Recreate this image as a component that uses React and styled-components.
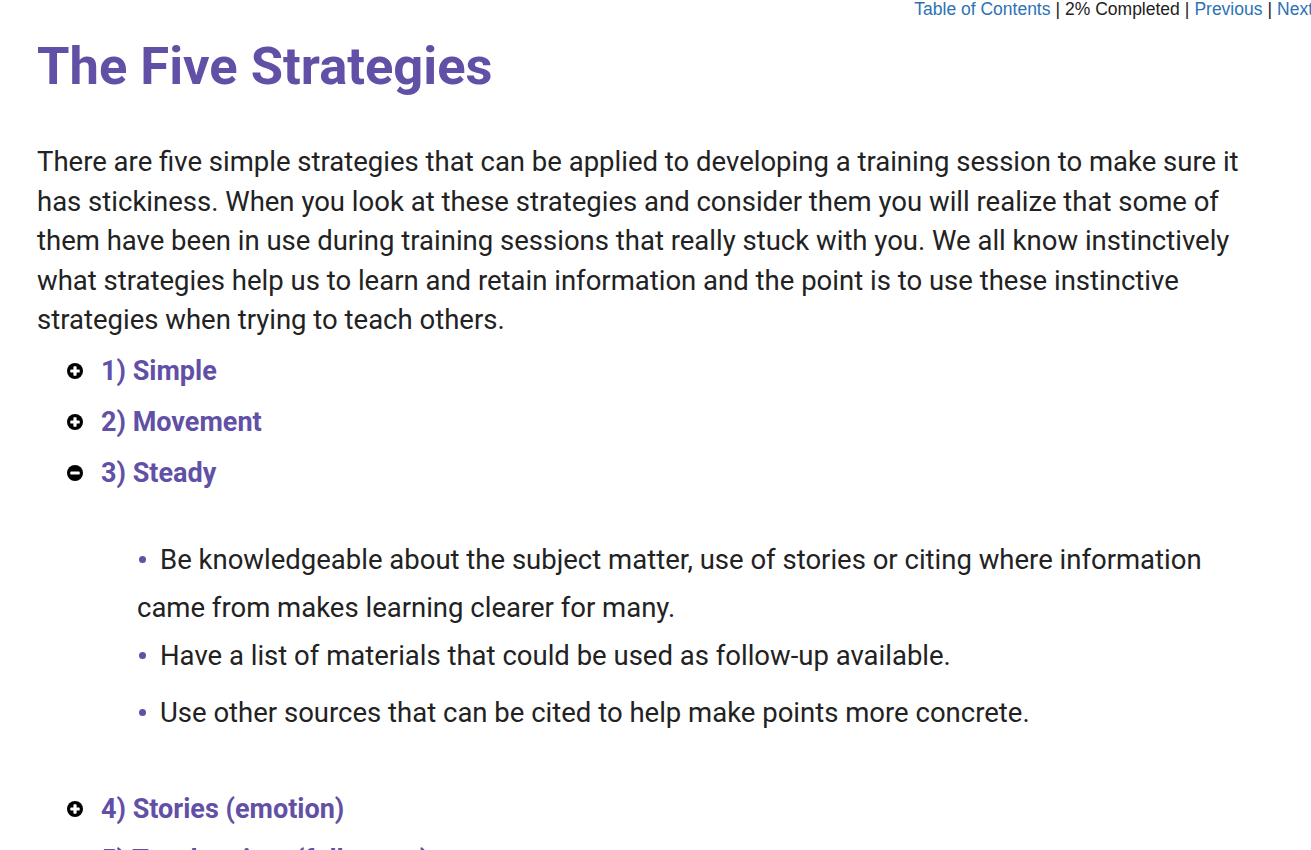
import React, { useState } from 'react';
import styled, { createGlobalStyle } from 'styled-components';

const GlobalStyle = createGlobalStyle`
  html, body {
    margin: 0;
    padding: 0;
    background: #fff;
    overflow-x: hidden;
  }
  body {
    font-family: Roboto, 'Noto Sans', sans-serif;
    color: #222;
  }
`;

const PURPLE = '#6250a6';

const Page = styled.div`
  width: 1311px;
  height: 850px;
  overflow: hidden;
`;

const TopNav = styled.nav`
  display: flex;
  justify-content: flex-end;
  margin-right: -2px;
  font-family: 'Liberation Sans', Arial, sans-serif;
  font-size: 17.5px;
  line-height: 18px;
  color: #222;
  white-space: nowrap;

  a {
    color: #2b72b5;
    text-decoration: none;
  }
  span.sep {
    margin: 0 5px;
  }
`;

const Content = styled.main`
  padding: 0 0 0 37px;
  width: 1215px;
`;

const Title = styled.h1`
  margin: 17px 0 0;
  font-size: 52.5px;
  line-height: 62px;
  font-weight: 700;
  color: ${PURPLE};
`;

const Intro = styled.p`
  margin: 45px 0 0;
  font-size: 27.5px;
  line-height: 39.5px;
  color: #222;
`;

const Accordion = styled.ul`
  list-style: none;
  margin: 6px 0 0;
  padding: 0 0 0 30px;
`;

const Item = styled.li`
  margin: 0;
`;

const Header = styled.button`
  display: flex;
  align-items: center;
  gap: 18px;
  height: 51px;
  padding: 0;
  border: 0;
  background: none;
  cursor: pointer;
  font-family: Roboto, sans-serif;
  font-size: 27px;
  font-weight: 700;
  color: ${PURPLE};
`;

const Panel = styled.ul`
  list-style: none;
  margin: 0;
  padding: 37px 0 47px 70px;
`;

const Bullet = styled.li`
  font-size: 27.5px;
  line-height: 48px;
  color: #222;
  margin-top: ${(p) => (p.$gap ? `${p.$gap}px` : '0')};

  &::before {
    content: '';
    display: inline-block;
    width: 7px;
    height: 7px;
    border-radius: 50%;
    background: ${PURPLE};
    margin: 0 14px 0 2px;
    vertical-align: 0.2em;
  }
`;

function ToggleIcon({ open }) {
  return (
    <svg width="16" height="16" viewBox="0 0 16 16" aria-hidden="true">
      <circle cx="8" cy="8" r="8" fill="#000" />
      <rect x="3.3" y="6.4" width="9.4" height="3.2" rx="0.7" fill="#fff" />
      {!open && <rect x="6.4" y="3.3" width="3.2" height="9.4" rx="0.7" fill="#fff" />}
    </svg>
  );
}

const strategies = [
  { title: '1) Simple', points: [] },
  { title: '2) Movement', points: [] },
  {
    title: '3) Steady',
    points: [
      'Be knowledgeable about the subject matter, use of stories or citing where information came from makes learning clearer for many.',
      'Have a list of materials that could be used as follow-up available.',
      'Use other sources that can be cited to help make points more concrete.',
    ],
  },
  { title: '4) Stories (emotion)', points: [] },
  { title: '5) Touch points (follow-up)', points: [] },
];

export default function App() {
  const [open, setOpen] = useState(2);

  return (
    <Page>
      <GlobalStyle />
      <TopNav>
        <a href="#toc">Table of Contents</a>
        <span className="sep">|</span>
        <span>2% Completed</span>
        <span className="sep">|</span>
        <a href="#prev">Previous</a>
        <span className="sep">|</span>
        <a href="#next">Next</a>
      </TopNav>
      <Content>
        <Title>The Five Strategies</Title>
        <Intro>
          There are five simple strategies that can be applied to developing a training session to make sure it
          has stickiness. When you look at these strategies and consider them you will realize that some of
          them have been in use during training sessions that really stuck with you. We all know instinctively
          what strategies help us to learn and retain information and the point is to use these instinctive
          strategies when trying to teach others.
        </Intro>
        <Accordion>
          {strategies.map((s, i) => (
            <Item key={s.title}>
              <Header onClick={() => setOpen(open === i ? -1 : i)}>
                <ToggleIcon open={open === i} />
                {s.title}
              </Header>
              {open === i && (
                <Panel>
                  {s.points.map((pt, j) => (
                    <Bullet key={pt} $gap={j === 2 ? 9 : 0}>
                      {pt}
                    </Bullet>
                  ))}
                </Panel>
              )}
            </Item>
          ))}
        </Accordion>
      </Content>
    </Page>
  );
}
